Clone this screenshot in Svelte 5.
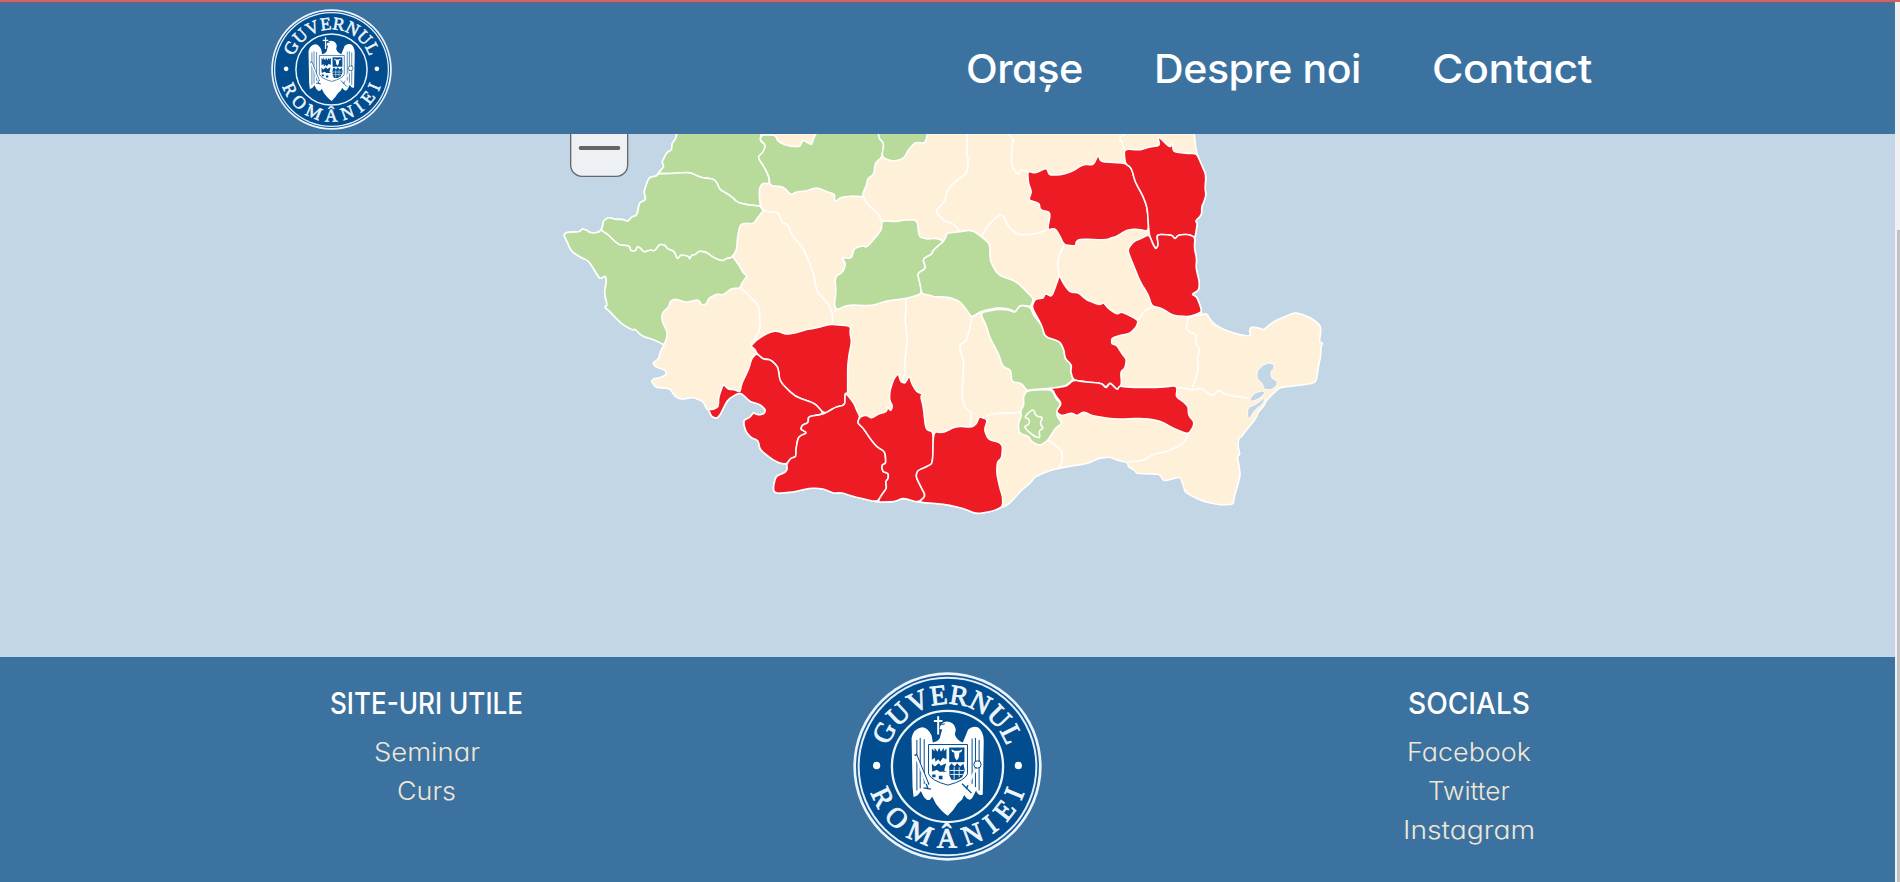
<script>
  const nav = [
    { label: 'Orașe', width: 117 },
    { label: 'Despre noi', width: 207 },
    { label: 'Contact', width: 160 }
  ];
  const useful = [
    { label: 'Seminar', width: 106 },
    { label: 'Curs', width: 59 }
  ];
  const socials = [
    { label: 'Facebook', width: 124 },
    { label: 'Twitter', width: 82 },
    { label: 'Instagram', width: 132 }
  ];

  // Stretches a label horizontally so that it takes up the given width.
  function fit(node, width) {
    const natural = node.getBoundingClientRect().width;
    node.style.transform = `scaleX(${width / natural})`;
    node.style.transformOrigin = 'left';
    node.style.width = width + 'px';
  }

  // Origins of the map sheets in map units.
  const sheets = { A: [0, 0], B: [480, 0], C: [1200, 0], D: [0, 525], E: [720, 525], F: [1380, 525] };

  // "A 1,2 3,4 B 5,6" -> points in map units.
  function pts(text) {
    let o = [0, 0];
    const out = [];
    for (const t of text.trim().split(/\s+/)) {
      if (sheets[t]) o = sheets[t];
      else {
        const [x, y] = t.split(',').map(Number);
        out.push([x + o[0], y + o[1]]);
      }
    }
    return out;
  }

  const toward = (a, b) => [a[0] + (b[0] - a[0]) * 0.32, a[1] + (b[1] - a[1]) * 0.32];

  // Path through the points, with every corner slightly rounded.
  function outline(text, closed = true) {
    const p = pts(text);
    const n = p.length;
    let d = '';
    if (closed) {
      for (let i = 0; i < n; i++) {
        const a = toward(p[i], p[(i + n - 1) % n]);
        const b = toward(p[i], p[(i + 1) % n]);
        d += `${i ? 'L' : 'M'}${a}Q${p[i]} ${b}`;
      }
      return d + 'Z';
    }
    d = `M${p[0]}`;
    for (let i = 1; i < n - 1; i++) d += `L${toward(p[i], p[i - 1])}Q${p[i]} ${toward(p[i], p[i + 1])}`;
    return d + `L${p[n - 1]}`;
  }

  const coastBihor = 'A 412,15 408,40 396,55 395,75 380,83 372,100 366,110 372,125 360,138 354,146';
  const coastArad = 'A 354,146 350,153 327,157 318,182 312,200 318,225 298,233 293,262 288,272 275,276 263,290 250,283 225,283 207,277 190,287 187,308 183,315';
  const coastTimis = 'A 183,315 175,322 160,324 148,322 140,315 125,312 120,320 80,322 71,330 80,347 93,377 118,395 145,407 160,430 175,455 182,461 197,452 199,470 193,505 202,540 194,548 D 205,30 245,72 278,90 285,87 305,108 345,120 372,135';
  const coastCaras = 'D 372,135 362,152 355,178 338,188 345,200 375,210 380,222 365,232 340,236 334,245 348,263 390,265 405,290 425,298 460,292 490,305 500,328';
  const coastMehedinti = 'D 505,328 515,350 530,355 540,345 560,305 570,295 590,282 605,280 630,305 660,313 677,330 672,342 655,345 640,338 630,352 612,360 612,375 618,395 632,412 655,422 660,450 700,480 720,490 740,492';
  const coastDolj = 'D 740,492 742,508 735,518 708,528 700,560 702,575 712,580 E 20,578 45,575 90,564 130,566 160,580 185,578 215,588 292,607';
  const coastTeleorman = 'E 415,607 490,612 550,625 590,642 640,633 668,620';
  const coastEast = 'F 12,620 30,610 60,575 90,550 105,530 150,512 180,504 215,498 265,490 295,475 330,471 355,482 383,488 385,500 405,512 410,521 470,522 480,525 492,544 540,530 548,550 556,578 610,605 665,615 700,613 703,590 712,560 721,525 716,490 712,470 720,462 714,440 716,415 727,408 735,395 760,365 770,350 775,335 790,320 800,300 820,280 840,262 880,258 940,250 950,240 955,200 962,170 963,140 968,130 958,125 963,90 960,75 935,55 905,42 882,38 855,50 820,65 790,90 780,85 755,80 748,90 752,108 720,105 680,92 645,75 628,55 620,40 605,45';
  const coastGalati = 'C 785,560 780,540 770,515 755,508 777,495 778,470 768,430 770,400 763,370 765,337';
  const coastVaslui = 'C 765,337 768,320 772,295 766,288 785,270 785,245 792,230 798,210 795,190 798,150 785,120 770,85';

  const country = [coastBihor, coastArad, coastTimis, coastCaras, coastMehedinti, coastDolj, 'E 345,605 368,594', coastTeleorman, coastEast, coastGalati, coastVaslui, 'C 765,50 762,15'].join(' ');

  const green = [
    coastBihor + ' A 380,146 450,142 465,150 485,158 520,162 530,172 540,195 560,205 580,220 592,232 625,240 662,243 658,220 658,190 668,174 688,176 686,155 675,130 655,98 672,80 677,60 660,48 665,15',
    coastArad + ' A 205,330 235,360 268,362 272,378 287,378 292,364 302,370 312,382 330,375 345,378 358,358 375,360 382,372 402,378 412,403 422,390 445,393 449,403 455,390 465,390 478,378 500,382 520,398 548,408 560,400 575,398 590,375 592,340 600,300 615,294 640,297 655,275 670,257 662,243 625,240 592,232 580,220 560,205 540,195 530,172 520,162 485,158 465,150 450,142 380,146',
    coastTimis + ' D 380,115 382,95 368,68 A 365,575 370,560 387,545 390,530 405,521 440,533 475,523 485,540 500,537 505,520 530,507 550,510 575,490 600,490 605,475 622,452 610,445 600,425 585,405 578,392 575,398 560,400 548,408 520,398 500,382 478,378 465,390 455,390 449,403 445,393 422,390 412,403 402,378 382,372 375,360 358,358 345,378 330,375 312,382 302,370 292,364 287,378 272,378 268,362 235,360 205,330',
    'B 185,30 225,30 235,50 260,62 300,66 308,45 318,50 335,60 340,40 355,15 535,15 537,40 552,55 547,95 525,115 522,148 503,160 500,180 488,205 490,215 455,213 420,218 410,228 403,224 405,208 380,200 350,187 320,198 290,200 272,210 250,185 210,182 207,155 192,125 173,97 190,80 197,60 180,45',
    'B 535,15 537,40 552,55 545,97 580,110 612,100 625,75 645,52 675,55 682,30 685,15',
    'B 545,287 590,290 610,285 652,285 657,335 680,342 710,340 732,348 700,375 695,388 668,402 678,430 652,445 660,475 665,507 620,520 560,528 515,542 450,540 432,545 410,555 403,540 408,500 405,455 430,440 437,415 425,398 455,400 462,370 490,362 500,368 545,315',
    'B 732,348 740,330 C 20,325 60,320 95,315 125,335 150,358 150,410 175,450 230,470 275,515 280,525 272,545 240,540 225,562 210,552 170,548 120,560 95,578 80,555 60,530 30,517 -20,515 B 690,510 665,507 660,475 652,445 678,430 668,402 695,388 700,375',
    'E 600,38 650,28 685,30 705,38 720,15 752,22 F 100,45 125,75 135,110 180,125 192,150 195,175 215,195 212,215 220,240 195,258 160,265 100,268 80,272 E 725,250 695,245 693,210 668,200 655,160 630,115 620,80',
    'F 80,272 150,268 160,278 170,300 185,310 170,335 172,350 187,370 165,385 145,420 120,437 95,425 85,408 57,400 55,370 65,345 60,335 72,315 70,290'
  ];

  const red = [
    'D 632,138 650,120 680,100 708,92 740,103 770,98 E 80,88 110,84 140,75 160,73 212,78 210,100 215,125 207,165 203,200 203,280 195,280 195,315 165,322 132,342 105,310 45,290 0,245 D 718,240 714,200 690,178 670,178 650,160 645,148',
    coastMehedinti + ' D 752,475 768,470 768,448 775,410 E 82,398 62,388 67,375 85,368 85,350 132,342 105,310 45,290 0,245 D 714,200 690,178 670,178 650,160 635,175 625,210 605,250 600,277 582,268 565,268 550,252 536,290 535,320 520,328',
    coastDolj + ' E 308,580 320,565 317,545 325,535 325,520 308,515 305,495 318,490 315,455 290,440 270,415 250,385 232,368 240,350 230,330 222,310 203,285 195,280 195,315 165,322 132,342 85,350 85,368 67,375 62,388 82,398 55,410 48,445 48,470 32,475',
    'E 240,350 260,345 275,355 295,342 320,335 322,320 332,333 338,318 328,300 330,270 342,235 355,220 362,245 375,250 388,226 395,250 410,275 428,282 422,290 430,320 435,370 440,390 460,395 458,490 440,500 412,512 408,530 420,555 437,588 415,607 368,594 345,605 292,607 308,580 320,565 317,545 325,535 325,520 308,515 305,495 318,490 315,455 290,440 270,415 250,385 232,368',
    coastTeleorman + ' E 668,590 660,565 650,520 652,485 665,475 668,440 660,428 625,418 613,390 623,358 597,350 590,370 575,382 530,378 490,398 460,395 458,490 440,500 412,512 408,530 420,555 437,588',
    'C 263,138 285,145 320,128 328,150 360,150 395,140 430,118 460,120 475,88 482,110 520,112 555,115 575,130 585,170 610,215 622,250 627,320 590,312 560,315 530,335 515,338 500,345 420,342 408,350 408,363 372,360 358,330 345,310 322,315 332,262 300,255 298,235 265,225 275,200 265,175',
    coastVaslui + ' C 735,85 700,80 697,53 690,68 652,31 660,62 630,65 600,75 552,72 555,115 575,130 585,170 610,215 622,250 627,328 640,360 648,372 655,360 650,328 695,330 705,342 715,330 745,328',
    coastGalati + ' C 745,328 715,330 705,342 695,330 650,328 655,360 648,372 640,360 627,328 600,342 580,350 562,375 580,420 600,470 625,510 635,543 665,550 700,572 745,575 770,568',
    'C 358,450 370,475 390,502 415,502 440,525 480,540 490,532 505,550 530,568 545,560 595,585 F 410,80 390,100 355,108 335,115 335,132 350,135 365,160 380,178 375,205 362,215 365,255 350,272 345,262 330,248 318,262 305,250 250,245 220,240 212,215 215,195 195,175 192,150 180,125 135,110 125,75 95,22 C 285,522 310,520 315,505 335,515 350,475',
    'F 148,265 175,262 200,258 220,240 250,245 305,250 318,265 330,248 352,270 358,258 370,260 400,262 470,262 500,260 525,257 532,265 528,290 550,305 565,320 565,345 582,365 580,380 565,403 520,385 480,362 430,355 345,358 280,348 250,335 230,348 215,338 185,348 168,335 185,310 165,285 160,272'
  ];

  const borders = [
    'B 180,242 190,258 235,262 245,290 265,300 275,330 310,370 340,440 350,500 385,535 397,565 398,600',
    'B 403,560 410,555',
    'B 122,488 150,515 178,545 180,600 D 658,95 632,135',
    'B 490,215 503,240 535,265 545,287',
    'C 82,20 80,80 85,110 80,145 45,170 22,195 15,225 5,240 -15,258 15,290 38,295 60,320',
    'C 205,27 222,45 215,60 215,125 235,150 240,135 265,140',
    'C 125,335 140,305 165,280 180,268 192,275 205,305 235,330 280,328 322,315',
    'C 372,360 358,390 352,420 358,452',
    'C 552,72 545,50 537,40 560,22',
    'C 595,585 610,560 635,545',
    'F 605,45 565,50 558,90 590,105 585,125 600,150 592,170 595,210 580,255 575,270',
    'F 535,262 575,270 605,265 625,280 640,288 655,270 680,285 745,294',
    'F 565,403 550,432 500,455 460,462 430,482 385,485',
    'F 145,420 185,450 188,480 178,503',
    'E 378,-5 378,30 375,60 382,120 375,175 375,215 368,248',
    'E 575,50 570,85 558,125 540,132 540,150 552,185 545,290 555,325 575,335 570,380',
    'E 575,50 600,38',
    'E 610,355 625,345 650,340 715,338 725,335'
  ];
  const bucharest = 'F 85,338 100,328 108,348 128,352 120,370 130,385 117,392 120,414 105,410 82,392 73,380 88,372 88,358 74,352';
  const water = [
    'F 772,210 800,188 822,192 822,205 812,215 815,235 832,243 830,258 812,270 792,268 787,250 770,235',
    'F 750,295 765,278 790,272 795,280 775,298 752,305',
    'F 745,322 770,312 795,292 790,310 765,330 745,360 742,340'
  ];
</script>

{#snippet seal(id)}
  <svg class="seal" viewBox="38 34 568 568" aria-hidden="true">
    <defs>
      <path id="{id}-top" d="M134 318A188 188 0 0 1 510 318" />
      <path id="{id}-bottom" d="M78 318A244 244 0 0 0 566 318" />
    </defs>
    <circle cx="322" cy="318" r="283" fill="#edf5fb" />
    <circle cx="322" cy="318" r="275" fill="#14599a" />
    <circle cx="322" cy="318" r="270" fill="#e4eff8" />
    <circle cx="322" cy="318" r="264" fill="#014d8f" />
    <circle cx="322" cy="318" r="167" fill="#014d8f" stroke="#edf5fb" stroke-width="7" />
    <g class="ring-text">
      <text text-anchor="middle" textLength="466"><textPath href="#{id}-top" startOffset="50%">GUVERNUL</textPath></text>
      <text text-anchor="middle" textLength="606"><textPath href="#{id}-bottom" startOffset="50%">ROMÂNIEI</textPath></text>
    </g>
    <circle cx="109" cy="315" r="11" fill="#fff" />
    <circle cx="535" cy="315" r="11" fill="#fff" />
    <g fill="#fff">
      <path d="M298 205Q302 184 321 183Q343 185 347 207L344 222Q350 240 368 246L384 207Q397 195 413 200Q430 210 431 240L428 402Q414 408 408 390L398 410Q388 428 372 404L366 417L352 430Q342 448 323 466Q308 458 287 430L276 408Q266 430 250 408L242 392Q233 408 220 410L217 380L214 232Q220 204 245 200Q262 200 274 224L278 246Q300 242 301 224L306 207Z" />
      <path d="M291 167H297V178H307V184H297V222H291V184H281V178H291Z" />
    </g>
    <g fill="none" stroke="#014d8f" stroke-width="3">
      <path d="M230 238V390M240 232V384M252 236V370M396 234V370M406 232V380M417 238V390" />
      <path d="M224 282L264 386M228 280L266 372M418 300L378 386M250 382L272 386M394 398L366 370" stroke-width="4" />
      <path d="M304 192L314 190" />
    </g>
    <path d="M226 286L260 370M408 325L382 374" stroke="#fff" stroke-width="7" />
    <circle cx="412" cy="312" r="11" fill="#fff" stroke="#014d8f" stroke-width="3" />
    <path d="M265 252H382V340Q376 360 323 374Q272 360 265 340Z" fill="#fff" stroke="#014d8f" stroke-width="3" />
    <g fill="#014d8f">
      <path d="M275 264L283 272V262L292 274L297 262L302 274L311 262V272L319 264V296L308 292L300 304L294 296L286 304L284 292L275 298Z" />
      <path d="M327 261H373V305H327Z" />
      <path d="M275 310L284 318L296 308L302 316L318 308L312 330L320 334H298L290 328L276 334ZM276 342H286V350H276ZM296 346H307V356H296Z" />
      <path d="M327 318L334 308L343 318L351 308L360 318L370 310L374 330L366 350L350 358L334 358L328 346Z" />
    </g>
    <path d="M334 266Q334 276 342 276L344 292L350 300L356 292L358 276Q366 276 366 266L357 271H343Z" fill="#fff" />
    <path d="M328 330H372M330 342H368M342 320V356M357 320V350" stroke="#fff" stroke-width="2.5" />
  </svg>
{/snippet}

<div class="page">
  <div class="content">
    <header>
      <div class="logo">{@render seal('head')}</div>
      <nav>
        {#each nav as item}
          <a href="#top"><span use:fit={item.width}>{item.label}</span></a>
        {/each}
      </nav>
    </header>

    <main>
      <svg class="map" viewBox="-1620 27 5685 1569">
        <path class="land" d={outline(country)} />
        {#each green as c}<path class="county low" d={outline(c)} />{/each}
        {#each red as c}<path class="county high" d={outline(c)} />{/each}
        {#each borders as b}<path class="border" d={outline(b, false)} />{/each}
        <path class="border" d={outline(bucharest)} />
        {#each water as w}<path class="lake" d={outline(w)} />{/each}
        <rect x="92" y="-60" width="171" height="214" rx="34" fill="#edf1f4" stroke="#66686b" stroke-width="4" />
        <path d="M122 69H235" stroke="#626468" stroke-width="12" stroke-linecap="round" />
      </svg>
    </main>

    <footer>
      <section>
        <h2><span use:fit={193}>SITE-URI UTILE</span></h2>
        {#each useful as l}<a href="#top"><span use:fit={l.width}>{l.label}</span></a>{/each}
      </section>
      <div class="emblem">{@render seal('foot')}</div>
      <section>
        <h2><span use:fit={122}>SOCIALS</span></h2>
        {#each socials as l}<a href="#top"><span use:fit={l.width}>{l.label}</span></a>{/each}
      </section>
    </footer>
  </div>
  <div class="scroll"><div class="thumb"></div></div>
</div>

<style>
  :global(body) {
    margin: 0;
    overflow: hidden;
  }
  .page {
    display: flex;
    box-sizing: border-box;
    height: 882px;
    border-top: 2px solid #cc6468;
    background: #3c72a0;
    font-family: Inter, 'Open Sans', sans-serif;
    font-feature-settings: 'cv11' 1;
  }
  .content {
    flex: 1;
    display: flex;
    flex-direction: column;
    border-top: 1px solid #7a5a74;
  }
  header {
    display: flex;
    justify-content: space-between;
    box-sizing: border-box;
    height: 131px;
    padding: 6px 303px 0 271px;
    background: #3c72a0;
  }
  .logo {
    width: 121px;
    height: 121px;
  }
  .seal {
    display: block;
    width: 100%;
    height: 100%;
  }
  .ring-text {
    font-family: 'Liberation Serif', serif;
    font-size: 84px;
    fill: #edf5fb;
    stroke: #edf5fb;
    stroke-width: 2.6;
  }
  nav {
    display: flex;
    gap: 71px;
    padding-top: 36px;
  }
  a {
    text-decoration: none;
    white-space: nowrap;
  }
  span {
    display: inline-block;
    white-space: nowrap;
  }
  nav a {
    color: #fff;
    font-size: 39px;
    font-weight: 500;
    line-height: 48px;
    letter-spacing: -0.4px;
  }
  main {
    height: 523px;
    background: #c3d6e5;
  }
  .map {
    display: block;
    width: 1895px;
    height: 523px;
    overflow: hidden;
  }
  .land {
    fill: #fff0d9;
  }
  .land,
  .county,
  .border {
    stroke: #fff;
    stroke-width: 4.8;
    stroke-linejoin: round;
  }
  .border {
    fill: none;
  }
  .low {
    fill: #b8da9b;
  }
  .high {
    fill: #ed1c24;
  }
  .lake {
    fill: #c3d6e5;
    stroke: #fff;
    stroke-width: 3;
    stroke-linejoin: round;
  }
  footer {
    flex: 1;
    display: grid;
    grid-template-columns: repeat(3, 521px);
    justify-content: center;
    background: #3c72a0;
  }
  section {
    display: flex;
    flex-direction: column;
    align-items: center;
    padding-top: 27px;
  }
  h2 {
    margin: 0 0 10px;
    color: #fff;
    font-size: 30px;
    font-weight: 500;
    line-height: 39px;
  }
  section a {
    color: #efe6d6;
    font-size: 25px;
    font-weight: 300;
    line-height: 39px;
  }
  .emblem {
    justify-self: center;
    width: 189px;
    height: 189px;
    padding-top: 15px;
  }
  .scroll {
    width: 5px;
    padding-top: 228px;
    box-sizing: border-box;
    background: #f1f1f1;
    display: flex;
    justify-content: flex-end;
  }
  .thumb {
    width: 3px;
    background: #c1c1c1;
  }
</style>
